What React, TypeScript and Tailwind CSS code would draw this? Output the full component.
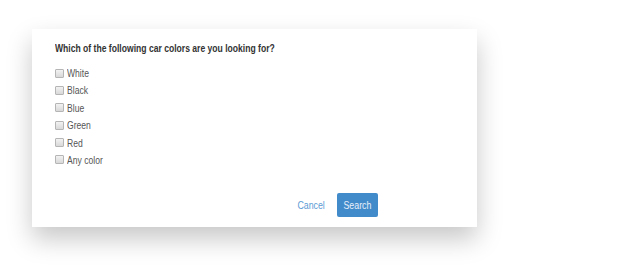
export default function App() {
  const colors = ["White", "Black", "Blue", "Green", "Red", "Any color"];
  return (
    <div className="w-[623px] h-[267px] bg-white pt-[29px] pl-[32px]" style={{ fontFamily: '"Liberation Sans", Arial, sans-serif' }}>
      <div className="relative w-[445px] h-[198px] bg-white shadow-[0_12px_24px_rgba(0,0,0,0.22)] pl-[23px] pt-[13px]">
        <div className="text-[11px] font-bold text-[#333] leading-[13px] whitespace-nowrap origin-left scale-x-[0.78]">Which of the following car colors are you looking for?</div>
        <div className="mt-[12px] flex flex-col gap-[5.4px]">
          {colors.map((c) => (
            <label key={c} className="flex items-center h-[12px] gap-[3px]">
              <span className="w-[9px] h-[9px] border border-[#b5b5b5] bg-gradient-to-b from-[#f2f2f2] to-[#d8d8d8] rounded-[1px]" />
              <span className="inline-block text-[11px] text-[#555] leading-[12px] whitespace-nowrap origin-left scale-x-[0.78]">{c}</span>
            </label>
          ))}
        </div>
        <div className="absolute left-[266px] top-[164px] flex items-center gap-[13px]">
          <div className="w-[26px] flex justify-center">
            <span className="inline-block text-[11px] text-[#5b9bd5] whitespace-nowrap scale-x-[0.8]">Cancel</span>
          </div>
          <button className="w-[41px] h-[24px] bg-[#428bca] rounded-[2px] flex items-center justify-center">
            <span className="inline-block text-[11px] text-[#e8f0fa] whitespace-nowrap scale-x-[0.8]">Search</span>
          </button>
        </div>
      </div>
    </div>
  );
}
